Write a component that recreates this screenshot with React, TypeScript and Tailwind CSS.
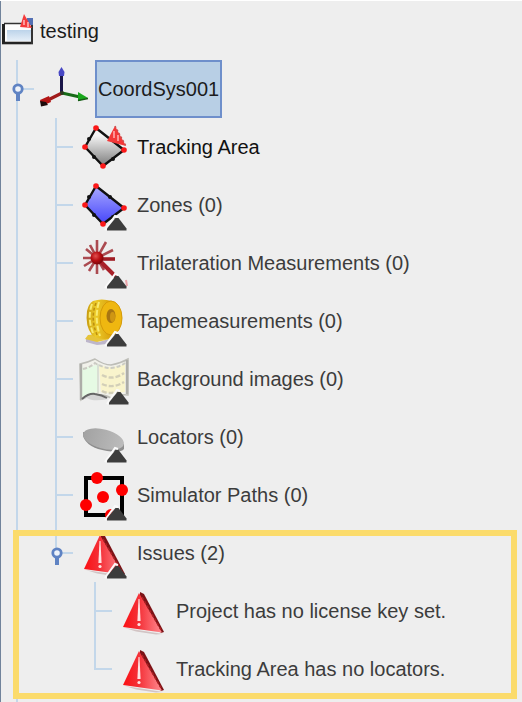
import type { ReactNode } from "react";

const LINE = "bg-[#c3d7ea]";

/* ---------- icons (52 x 58 canvas per row) ---------- */

function Icon({ children }: { children: ReactNode }) {
  return (
    <svg viewBox="0 0 52 58" className="h-[58px] w-[52px] shrink-0" aria-hidden="true">
      {children}
    </svg>
  );
}

function Collapsed({ x = 0 }: { x?: number }) {
  return (
    <g transform={`translate(${x} 0)`}>
      <path d="M26 54 L36 40 L39 41" fill="none" stroke="#fafafa" strokeWidth="2" />
      <path d="M28 54.5 V52.5 L36.5 42 H39.5 L47.5 52.5 V54.5 Z" fill="#3c3c3c" />
    </g>
  );
}

function Warning() {
  return (
    <g>
      <path d="M7 46 L45 52 L38 52.5 L18 49.5 Z" fill="#d2c4c4" />
      <path d="M22 10 L26 12 L46 50 L43 51 L22 20 Z" fill="#7c1216" />
      <path d="M21 11 L44 50.5 L5 45 Z" fill="url(#warnFill)" />
      <path d="M24 15 L43 48" stroke="#b02024" strokeWidth="1.5" strokeDasharray="3 2" />
      <path d="M20.5 17 H21.5 L22.6 39 H19.4 Z" fill="#ffe3e3" />
      <circle cx="21" cy="42.5" r="1.6" fill="#ffe3e3" />
    </g>
  );
}

function Quad({ fill }: { fill: string }) {
  return (
    <g>
      <path d="M17 10 L45 32 L24 48 L6 29 Z" fill={fill} stroke="#111" strokeWidth="2.4" strokeLinejoin="round" />
      {[[31, 21], [34, 41], [15, 39], [10, 21]].map(([x, y]) => (
        <circle key={`${x}-${y}`} cx={x} cy={y} r="2" fill="#111" />
      ))}
      {[[17, 10], [45, 32], [24, 48], [6, 29]].map(([x, y]) => (
        <circle key={`${x}-${y}`} cx={x} cy={y} r="2.8" fill="#fb1818" />
      ))}
    </g>
  );
}

function AxesIcon() {
  return (
    <Icon>
      <path d="M21.5 33 V13" stroke="#191548" strokeWidth="3" />
      <path d="M21.5 7 L24.5 12 L24 16 H19 L18.5 12 Z" fill="#4747c4" />
      <path d="M22 33 L40 37" stroke="#176b17" strokeWidth="3" />
      <path d="M38 32 L48 38 L38 41 Z" fill="#19a81c" />
      <path d="M38 40.5 L48 38.5" stroke="#155c15" strokeWidth="1.5" />
      <path d="M22 33 L8 40" stroke="#a01a1a" strokeWidth="3.4" />
      <path d="M9 36 L0 40 L2 46 L11 42 Z" fill="#b31515" />
      <path d="M0 41 L1 46.5 L8 45 L6 42 Z" fill="#1d0b0b" />
      <circle cx="22" cy="33" r="2" fill="#2c3a20" />
    </Icon>
  );
}

function TrackingAreaIcon() {
  return (
    <Icon>
      <Quad fill="url(#greyFill)" />
      <path d="M36 8 L47 28 L28 23 Z" fill="#f33838" />
      <path d="M36 8 L47 28" stroke="#c85050" strokeWidth="1.5" strokeDasharray="2 2" />
      <path d="M35 13 V20 M39 17 V23" stroke="#ffb3b3" strokeWidth="1.5" />
    </Icon>
  );
}

function ZonesIcon() {
  return (
    <Icon>
      <Quad fill="url(#blueFill)" />
      <Collapsed />
    </Icon>
  );
}

function TrilaterationIcon() {
  return (
    <Icon>
      <g stroke="#ab4a50" strokeWidth="2.6">
        <path d="M18 24 V6 M18 24 L27 8 M18 24 L34 16 M18 24 L25 36 M18 24 V40 M18 24 L10 37 M18 24 L5 32 M18 24 H4 M18 24 L7 15 M18 24 L11 11" />
        <path d="M18 25 H36" stroke="#a01c24" strokeWidth="3.6" />
        <path d="M22 28 L37 43" stroke="#a82028" strokeWidth="4" />
        <path d="M47 46 L48 52" stroke="#eba3a8" strokeWidth="2" />
      </g>
      <circle cx="18" cy="24" r="6.5" fill="url(#ballFill)" />
      <Collapsed />
    </Icon>
  );
}

function TapeIcon() {
  return (
    <Icon>
      <path d="M7 46 L20 50 L30 47 L28 52 L18 53 L7 50 Z" fill="#bdb6cb" />
      <path d="M9 43 L28 41 L31 47 L18 50 L6 47 Z" fill="#e6c43a" />
      <path d="M14 9 Q22 6 33 9 L33 46 Q20 49 13 43 Q6 34 8 19 Q10 11 14 9 Z" fill="url(#tapeFill)" />
      <path d="M13 12 Q8 26 14 41 M20 10 Q15 26 21 44" fill="none" stroke="#f8ea70" strokeWidth="2" strokeDasharray="6 2" />
      <path d="M17 11 Q11 26 18 43" fill="none" stroke="#bb8e10" strokeWidth="1.5" strokeDasharray="3 2" />
      <ellipse cx="32" cy="26" rx="11" ry="17" fill="#efb710" stroke="#d59a08" />
      <ellipse cx="32" cy="24" rx="4.5" ry="7" fill="#a87512" />
      <ellipse cx="33.5" cy="25" rx="2.5" ry="5" fill="#cf9613" />
      <Collapsed />
    </Icon>
  );
}

function MapIcon() {
  return (
    <Icon>
      <path d="M1 14 Q10 12 16 9 Q25 15 32 15 Q42 13 49 9 V45 Q40 44 32 48 Q25 44 16 45 Q8 46 2 50 Z" fill="#f1f1ea" stroke="#bdbdb7" strokeWidth="1.5" />
      <path d="M3 18 Q11 17 18 15 V42 Q10 44 3 47 Z" fill="#e6fae4" />
      <path d="M20 15 Q34 20 46 14 V42 Q34 44 22 42 Z" fill="#f9f4cc" />
      <path d="M4 19 Q12 17 16 13 Q24 18 32 18 Q41 17 46 13" fill="none" stroke="#cbcbc3" strokeWidth="2" strokeDasharray="4 2" />
      <path d="M23 25 Q34 31 45 23 M23 34 Q34 39 45 32 M23 41 Q30 45 40 41" fill="none" stroke="#d3cfb8" strokeWidth="2.4" strokeDasharray="5 2" />
      <path d="M2 14 V50 M48 10 V44" stroke="#adada8" strokeWidth="2.4" />
      <path d="M19 14 V43" stroke="#d0d8cc" strokeWidth="1.5" />
      <path d="M3 49 Q10 43 16 44 Q24 46 29 49 Q14 52 8 48 Z" fill="#d4d4d4" />
      <path d="M3 49 Q10 43 16 44 Q23 45 28 48" fill="none" stroke="#666" strokeWidth="2" />
      <Collapsed x={2} />
    </Icon>
  );
}

function LocatorIcon() {
  return (
    <Icon>
      <path d="M4 28 Q8 40 28 43 Q42 45 45 41 V36 L4 24 Z" fill="#8e8e8e" />
      <ellipse cx="24.5" cy="31" rx="21" ry="9.5" transform="rotate(15 24.5 31)" fill="url(#discFill)" />
      <Collapsed />
    </Icon>
  );
}

function SimulatorIcon() {
  return (
    <Icon>
      <rect x="7" y="12" width="36" height="37" fill="#f0f0f0" stroke="#000" strokeWidth="4" />
      {[[18, 12], [43, 24], [24, 31], [7, 39], [32, 49]].map(([x, y]) => (
        <circle key={`${x}-${y}`} cx={x} cy={y} r="6" fill="#fe0000" />
      ))}
      <path d="M28 55 L36 41 L47 55 Z" fill="#eee" />
      <Collapsed />
    </Icon>
  );
}

function ProjectIcon() {
  return (
    <svg viewBox="0 0 34 58" className="h-[58px] w-[34px] shrink-0" aria-hidden="true">
      <path d="M2 22 H31 V41 H2 Z" fill="#fdfdfd" />
      <path d="M6 28 H30 V39 H6 Z" fill="url(#panelFill)" />
      <path d="M3 21.5 H21" stroke="#333" strokeWidth="1.5" />
      <path d="M2.500 22 V41" stroke="#222" strokeWidth="3" />
      <path d="M1 41 H32" stroke="#222" strokeWidth="2.6" />
      <path d="M31 22 V42" stroke="#333" strokeWidth="2" />
      <path d="M26 16 H32 V23 H26 Z" fill="#5470b4" />
      <path d="M23 12 L31 26 L19 25 Z" fill="#f43b3b" />
      <path d="M23 18 V23 M27 20 V25" stroke="#ffd0d0" strokeWidth="1.3" />
    </svg>
  );
}

function Gradients() {
  return (
    <svg className="absolute h-0 w-0" aria-hidden="true">
      <defs>
        <linearGradient id="warnFill" x1="0" y1="0" x2="1" y2="0">
          <stop offset="0" stopColor="#fb0f13" />
          <stop offset="0.4" stopColor="#f43037" />
          <stop offset="1" stopColor="#ff8a90" />
        </linearGradient>
        <linearGradient id="greyFill" x1="0" y1="0" x2="0" y2="1">
          <stop offset="0.2" stopColor="#f4f4f4" />
          <stop offset="1" stopColor="#7c7c7c" />
        </linearGradient>
        <linearGradient id="blueFill" x1="0" y1="0" x2="0" y2="1">
          <stop offset="0" stopColor="#a9a9ff" />
          <stop offset="1" stopColor="#4545fa" />
        </linearGradient>
        <radialGradient id="ballFill" cx="0.4" cy="0.35" r="0.7">
          <stop offset="0" stopColor="#e05050" />
          <stop offset="0.5" stopColor="#b80d12" />
          <stop offset="1" stopColor="#700408" />
        </radialGradient>
        <linearGradient id="tapeFill" x1="0" y1="0" x2="1" y2="0">
          <stop offset="0" stopColor="#c79a10" />
          <stop offset="0.35" stopColor="#ecca28" />
          <stop offset="1" stopColor="#d9a00c" />
        </linearGradient>
        <linearGradient id="discFill" x1="0" y1="0" x2="1" y2="0">
          <stop offset="0" stopColor="#a2a2a2" />
          <stop offset="1" stopColor="#bcbcbc" />
        </linearGradient>
        <linearGradient id="panelFill" x1="0" y1="0" x2="0" y2="1">
          <stop offset="0" stopColor="#bcd3ea" />
          <stop offset="1" stopColor="#e6eff8" />
        </linearGradient>
      </defs>
    </svg>
  );
}

/* ---------- tree parts ---------- */

function Guide({ line = true }: { line?: boolean }) {
  return (
    <div className="flex w-[39px] shrink-0 self-stretch">
      {line && <div className={`w-[2px] ${LINE}`} />}
    </div>
  );
}

function Branch({ last = false }: { last?: boolean }) {
  return (
    <div className="flex w-6 shrink-0 items-center self-stretch">
      <div className={`w-[2px] ${LINE} ${last ? "mb-auto h-[30px]" : "h-full"}`} />
      <div className={`h-[2px] w-4 ${LINE}`} />
    </div>
  );
}

function Handle({ label, below = true }: { label: string; below?: boolean }) {
  return (
    <div className="relative flex w-6 shrink-0 items-center self-stretch">
      <div className={`w-[2px] ${LINE} ${below ? "h-full" : "mb-auto h-[30px]"}`} />
      <div className={`h-[2px] w-4 ${LINE}`} />
      <button type="button" aria-label={label} aria-expanded="true" className="absolute -left-1 top-5 h-6 w-3">
        <svg viewBox="0 0 12 24" className="h-6 w-3" aria-hidden="true">
          <path d="M6 12 V21" stroke="#5f83c3" strokeWidth="4" />
          <circle cx="6" cy="9" r="4.2" fill="#eef3fa" stroke="#5f83c3" strokeWidth="2.8" />
        </svg>
      </button>
    </div>
  );
}

type RowProps = { level: number; children: ReactNode };

function Row({ level, children }: RowProps) {
  return (
    <li role="treeitem" aria-level={level} className="flex h-[58px] items-center whitespace-nowrap">
      {children}
    </li>
  );
}

function Label({ children, strong = false }: { children: ReactNode; strong?: boolean }) {
  return <span className={`pl-[6px] ${strong ? "text-[#111111]" : "text-[#3c3c3c]"}`}>{children}</span>;
}

const folders: { name: string; icon: ReactNode; strong?: boolean }[] = [
  { name: "Tracking Area", icon: <TrackingAreaIcon />, strong: true },
  { name: "Zones (0)", icon: <ZonesIcon /> },
  { name: "Trilateration Measurements (0)", icon: <TrilaterationIcon /> },
  { name: "Tapemeasurements (0)", icon: <TapeIcon /> },
  { name: "Background images (0)", icon: <MapIcon /> },
  { name: "Locators (0)", icon: <LocatorIcon /> },
  { name: "Simulator Paths (0)", icon: <SimulatorIcon /> },
];

const issues = ["Project has no license key set.", "Tracking Area has no locators."];

export default function App() {
  return (
    <main className="flex min-h-screen flex-col overflow-hidden border-t border-white bg-[#eeeeee] font-['Liberation_Sans',Arial,sans-serif] text-[20px] leading-6">
      <Gradients />
      <div className="flex flex-1 flex-col border-l border-[#71839b] pt-px">
        <ul role="tree" aria-label="Project">
          <Row level={1}>
            <ProjectIcon />
            <span className="pl-[5px] text-[#1c1c1c]">testing</span>
          </Row>
          <Row level={2}>
            <div className="w-[15px] shrink-0" />
            <Handle label="Toggle CoordSys001" />
            <AxesIcon />
            <button
              type="button"
              className="ml-[3px] h-full border-2 border-[#6e8fcb] bg-[#b8cfe5] px-px text-[#1c1c1c]"
            >
              CoordSys001
            </button>
          </Row>
          {folders.map((item) => (
            <Row key={item.name} level={3}>
              <div className="w-[15px] shrink-0" />
              <Guide />
              <Branch />
              {item.icon}
              <Label strong={item.strong}>{item.name}</Label>
            </Row>
          ))}
          <li role="none" className="relative">
            <ul role="group">
              <Row level={3}>
                <div className="w-[15px] shrink-0" />
                <Guide />
                <Handle label="Toggle Issues" below={false} />
                <Icon>
                  <Warning />
                  <Collapsed />
                </Icon>
                <Label>Issues (2)</Label>
              </Row>
              {issues.map((text, i) => (
                <Row key={text} level={4}>
                  <div className="w-[15px] shrink-0" />
                  <Guide />
                  <Guide line={false} />
                  <Branch last={i === issues.length - 1} />
                  <Icon>
                    <Warning />
                  </Icon>
                  <Label>{text}</Label>
                </Row>
              ))}
            </ul>
            <div className="pointer-events-none absolute -bottom-px left-3 right-[5px] top-[6px] border-[6px] border-[#fbdb6b]" />
          </li>
        </ul>
        <div className="flex flex-1 pl-[15px]">
          <Guide />
        </div>
      </div>
    </main>
  );
}
